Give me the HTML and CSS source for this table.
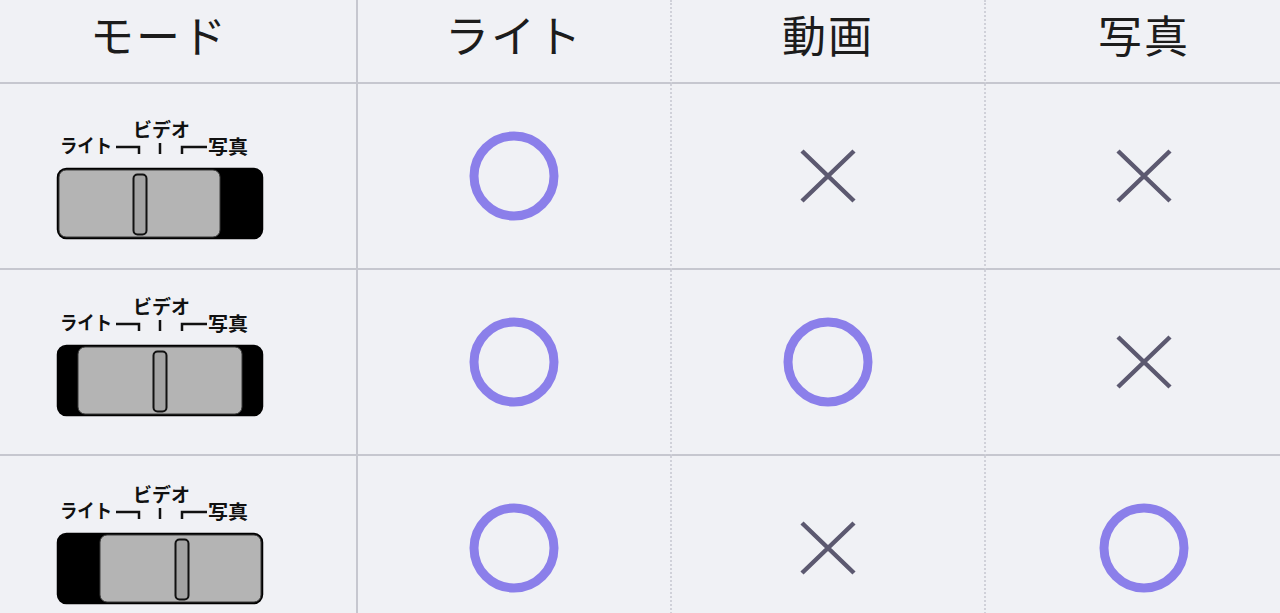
FILE: index.html
```html
<!DOCTYPE html>
<html lang="ja">
<head>
<meta charset="utf-8">
<title>モード</title>
<link rel="stylesheet" href="styles.css">
</head>
<body>
<div class="table">
  <div class="cell head c1">モード</div>
  <div class="cell head c2">ライト</div>
  <div class="cell head c3">動画</div>
  <div class="cell head c4">写真</div>

  <!-- row 1 -->
  <div class="cell mode c1 r1">
    <svg class="switch" width="212" height="132" viewBox="0 -8 212 132">
      <text class="lbl" x="5" y="36" textLength="52" lengthAdjust="spacingAndGlyphs">ライト</text>
      <text class="lbl" x="78" y="20" textLength="57" lengthAdjust="spacingAndGlyphs">ビデオ</text>
      <text class="lbl" x="153" y="37" textLength="40" lengthAdjust="spacingAndGlyphs">写真</text>
      <path class="br" d="M61 30H84V37M105 26V37M127 37V30H152"/>
      <rect x="2.5" y="51.5" width="205" height="70" rx="9" fill="#000" stroke="#000" stroke-width="1.5"/>
      <rect x="4" y="53" width="161" height="67" rx="7" fill="#b4b4b4" stroke="#3a3a3a" stroke-width="1"/>
      <rect x="78.5" y="57.5" width="13" height="60" rx="4" fill="#a3a3a3" stroke="#111" stroke-width="2"/>
    </svg>
  </div>
  <div class="cell c2"><svg class="ok" width="92" height="92" viewBox="0 0 92 92"><circle cx="46" cy="46" r="40" /></svg></div>
  <div class="cell c3"><svg class="ng" width="58" height="56" viewBox="0 0 58 56"><path d="M3 3L55 53M55 3L3 53"/></svg></div>
  <div class="cell c4"><svg class="ng" width="58" height="56" viewBox="0 0 58 56"><path d="M3 3L55 53M55 3L3 53"/></svg></div>

  <!-- row 2 -->
  <div class="cell mode c1 r2">
    <svg class="switch" width="212" height="132" viewBox="0 -8 212 132">
      <text class="lbl" x="5" y="36" textLength="52" lengthAdjust="spacingAndGlyphs">ライト</text>
      <text class="lbl" x="78" y="20" textLength="57" lengthAdjust="spacingAndGlyphs">ビデオ</text>
      <text class="lbl" x="153" y="37" textLength="40" lengthAdjust="spacingAndGlyphs">写真</text>
      <path class="br" d="M61 30H84V37M105 26V37M127 37V30H152"/>
      <rect x="2.5" y="51.5" width="205" height="70" rx="9" fill="#000" stroke="#000" stroke-width="1.5"/>
      <rect x="23" y="53" width="164" height="67" rx="7" fill="#b4b4b4" stroke="#3a3a3a" stroke-width="1"/>
      <rect x="98.5" y="57.5" width="13" height="60" rx="4" fill="#a3a3a3" stroke="#111" stroke-width="2"/>
    </svg>
  </div>
  <div class="cell c2"><svg class="ok" width="92" height="92" viewBox="0 0 92 92"><circle cx="46" cy="46" r="40" /></svg></div>
  <div class="cell c3"><svg class="ok" width="92" height="92" viewBox="0 0 92 92"><circle cx="46" cy="46" r="40" /></svg></div>
  <div class="cell c4"><svg class="ng" width="58" height="56" viewBox="0 0 58 56"><path d="M3 3L55 53M55 3L3 53"/></svg></div>

  <!-- row 3 -->
  <div class="cell mode c1 r3">
    <svg class="switch" width="212" height="132" viewBox="0 -8 212 132">
      <text class="lbl" x="5" y="36" textLength="52" lengthAdjust="spacingAndGlyphs">ライト</text>
      <text class="lbl" x="78" y="20" textLength="57" lengthAdjust="spacingAndGlyphs">ビデオ</text>
      <text class="lbl" x="153" y="37" textLength="40" lengthAdjust="spacingAndGlyphs">写真</text>
      <path class="br" d="M61 30H84V37M105 26V37M127 37V30H152"/>
      <rect x="2.5" y="51.5" width="205" height="70" rx="9" fill="#000" stroke="#000" stroke-width="1.5"/>
      <rect x="45" y="53" width="161" height="67" rx="7" fill="#b4b4b4" stroke="#3a3a3a" stroke-width="1"/>
      <rect x="120.5" y="57.5" width="13" height="60" rx="4" fill="#a3a3a3" stroke="#111" stroke-width="2"/>
    </svg>
  </div>
  <div class="cell c2"><svg class="ok" width="92" height="92" viewBox="0 0 92 92"><circle cx="46" cy="46" r="40" /></svg></div>
  <div class="cell c3"><svg class="ng" width="58" height="56" viewBox="0 0 58 56"><path d="M3 3L55 53M55 3L3 53"/></svg></div>
  <div class="cell c4"><svg class="ok" width="92" height="92" viewBox="0 0 92 92"><circle cx="46" cy="46" r="40" /></svg></div>
</div>
</body>
</html>
```
FILE: styles.css
```css
html, body {
  margin: 0;
  padding: 0;
  background: #f0f1f5;
  overflow: hidden;
}

body {
  font-family: "Noto Sans CJK JP", "Noto Sans", sans-serif;
  color: #1c1c1c;
}

.table {
  display: grid;
  grid-template-columns: 358px 314px 314px 1fr;
  grid-template-rows: 84px 186px 186px 186px;
  width: 1280px;
}

.cell {
  display: flex;
  align-items: center;
  justify-content: center;
  border-bottom: 2px solid #c6c7cf;
  box-sizing: border-box;
}

.c1 {
  border-right: 2px solid #c6c7cf;
}

.c2, .c3 {
  border-right: 2px dotted #d0d1d9;
}

.head {
  font-size: 44px;
  font-weight: 400;
  letter-spacing: 2px;
  padding-bottom: 15px;
}

.head.c1 {
  padding-right: 38px;
}

.c4 {
  padding-left: 22px;
}

.mode {
  align-items: flex-start;
  justify-content: flex-start;
  padding-left: 55px;
}

.r1 { padding-top: 25px; }
.r2 { padding-top: 16px; }
.r3 { padding-top: 18px; }

.switch .lbl {
  font-family: "Noto Sans CJK JP", sans-serif;
  font-weight: 700;
  font-size: 19px;
  fill: #111;
}

.switch .br {
  fill: none;
  stroke: #111;
  stroke-width: 2.5;
}

.ok circle {
  fill: none;
  stroke: #8b7fea;
  stroke-width: 9;
}

.ng path {
  fill: none;
  stroke: #5c5970;
  stroke-width: 4.5;
}
```
